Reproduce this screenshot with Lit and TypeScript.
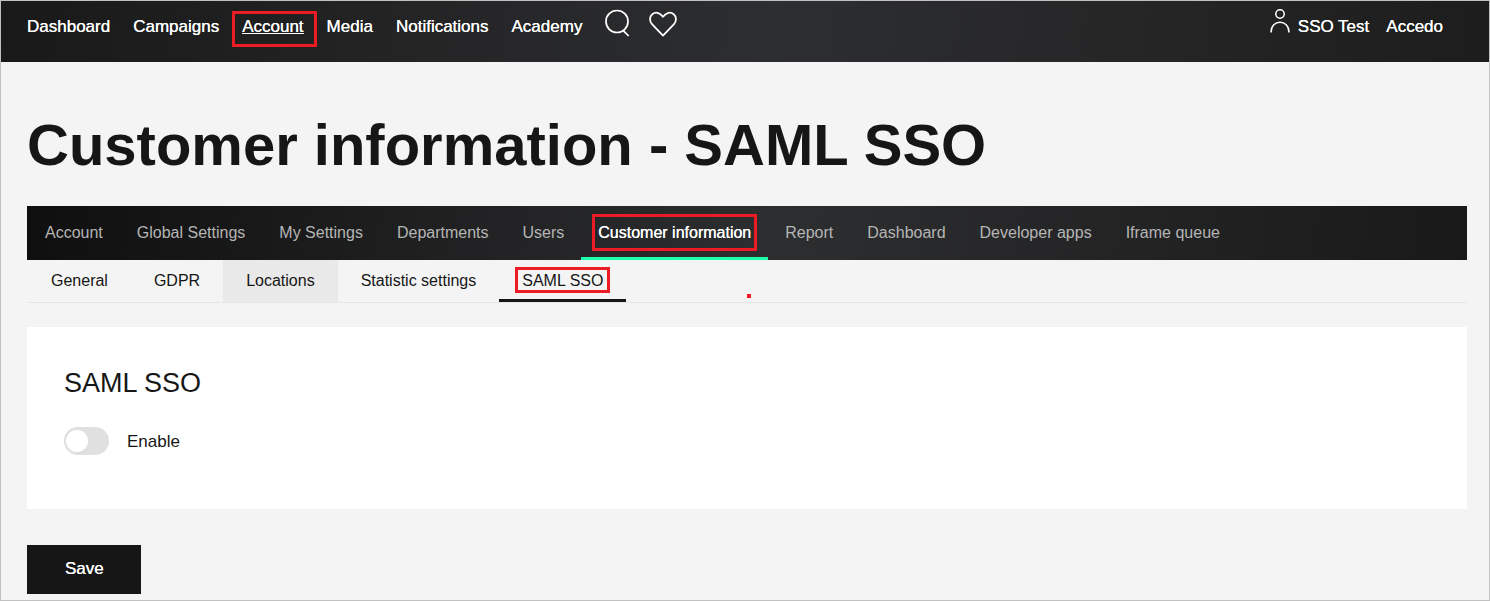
import { LitElement, html, css } from "lit";
import { customElement, state } from "lit/decorators.js";
import { classMap } from "lit/directives/class-map.js";

const MAIN_LINKS = ["Dashboard", "Campaigns", "Account", "Media", "Notifications", "Academy"];
const SECTIONS = [
  "Account",
  "Global Settings",
  "My Settings",
  "Departments",
  "Users",
  "Customer information",
  "Report",
  "Dashboard",
  "Developer apps",
  "Iframe queue",
];
const TABS = ["General", "GDPR", "Locations", "Statistic settings", "SAML SSO"];

@customElement("app-root")
export class AppRoot extends LitElement {
  @state() private enabled = false;

  static styles = css`
    :host {
      display: block;
      font-family: "Liberation Sans", Arial, sans-serif;
      font-size: 16px;
      line-height: 20px;
      color: #161616;
    }
    a {
      color: inherit;
      text-decoration: none;
    }
    .page {
      box-sizing: border-box;
      min-height: 100vh;
      border: 1px solid #c1c1c1;
      background: #f4f4f4;
    }
    .topbar {
      display: flex;
      justify-content: space-between;
      align-items: flex-start;
      box-sizing: border-box;
      height: 61px;
      padding: 7px 46px 0 26px;
      background: linear-gradient(95deg, #191919, #2d2e30 52%, #1d1d1d);
      color: #fff;
      font-size: 17px;
      text-shadow: 0 0 0 #fff;
    }
    .links,
    .user {
      display: flex;
      align-items: flex-start;
      gap: 23px;
    }
    .user {
      gap: 17px;
    }
    .links a,
    .user a {
      display: flex;
      position: relative;
      padding-top: 9px;
    }
    .links .icon-link,
    .user .person {
      padding-top: 0;
    }
    .links .heart {
      margin-left: -5px;
    }
    .user .person {
      gap: 8px;
    }
    .person span {
      padding-top: 9px;
    }
    .links .current {
      text-decoration: underline;
    }
    svg {
      display: block;
      fill: none;
      stroke: currentColor;
    }
    .current::after,
    .section.active::before,
    .tab.active::before {
      content: "";
      position: absolute;
      border: 3px solid #ed1c24;
    }
    .current::after {
      inset: 3px -13px -10px -10px;
    }
    main {
      padding: 0 22px 6px 26px;
    }
    h1 {
      margin: 0;
      padding: 49px 0 27px;
      font-size: 58px;
      line-height: 68px;
      font-weight: 700;
    }
    .sections {
      display: flex;
      padding-left: 1px;
      background: linear-gradient(95deg, #0f0f0f, #2d2e30 52%, #191919);
      color: #b5b5b5;
    }
    .section {
      position: relative;
      padding: 17px 17px 14px;
      border-bottom: 3px solid transparent;
    }
    .section.active {
      border-bottom-color: #1dffab;
      color: #fff;
      text-shadow: 0 0 0 #fff;
    }
    .section.active::before {
      inset: 8px 11px 6px;
    }
    .tabs {
      display: flex;
      position: relative;
      padding-left: 1px;
      border-bottom: 1px solid #e6e6e6;
    }
    .tab {
      position: relative;
      padding: 11px 23px 8px;
      border-bottom: 3px solid transparent;
    }
    .tab.hovered {
      background: #e9e9e9;
      border-bottom-color: #e9e9e9;
    }
    .tab.active {
      border-bottom-color: #161616;
    }
    .tab.active::before {
      inset: 7px 16px 6px;
    }
    .dot {
      position: absolute;
      left: 50%;
      bottom: 4px;
      width: 4px;
      height: 4px;
      background: #ed1c24;
    }
    .card {
      margin-top: 24px;
      padding: 38px 37px 54px;
      background: #fff;
    }
    h2 {
      margin: 0 0 26px;
      font-size: 27px;
      line-height: 36px;
      font-weight: 400;
    }
    .switch {
      display: flex;
      align-items: center;
      gap: 18px;
      width: max-content;
      font-size: 17px;
    }
    .switch span {
      padding-top: 2px;
    }
    .switch input {
      appearance: none;
      box-sizing: border-box;
      width: 45px;
      height: 28px;
      margin: 0;
      padding: 3px 2px;
      border-radius: 14px;
      background: #e0e0e0;
      display: flex;
    }
    .switch input::before {
      content: "";
      width: 22px;
      height: 22px;
      border-radius: 50%;
      background: #fff;
    }
    .switch input:checked {
      justify-content: flex-end;
      background: #1dffab;
    }
    .save {
      display: block;
      margin-top: 36px;
      padding: 14px 37px 15px 38px;
      border: 0;
      background: #161616;
      color: #fff;
      font-family: inherit;
      font-size: 17px;
      line-height: 20px;
      text-shadow: 0 0 0 #fff;
    }
  `;

  render() {
    return html`
      <div class="page">
        <header class="topbar">
          <nav class="links" aria-label="Main">
            ${MAIN_LINKS.map(
              (name) => html`<a href="#" class=${classMap({ current: name === "Account" })}>${name}</a>`
            )}
            <a href="#" class="icon-link" aria-label="Search">
              <svg width="26" height="30" viewBox="0 0 26 30" stroke-width="1.7">
                <circle cx="12" cy="13.5" r="11" />
                <path d="M18 22.3 23.7 28" />
              </svg>
            </a>
            <a href="#" class="icon-link heart" aria-label="Favourites">
              <svg width="28" height="30" viewBox="0 0 28 30" stroke-width="1.8" stroke-linejoin="round">
                <path
                  d="M14 27.6 3.2 16.4C.2 13.2.4 8.6 3.3 6.2 6.4 3.6 10.6 4.3 14 8.8 17.400 4.3 21.600 3.6 24.7 6.2 27.6 8.6 27.8 13.2 24.8 16.4Z"
                />
              </svg>
            </a>
          </nav>
          <div class="user">
            <a href="#" class="person">
              <svg width="20" height="26" viewBox="0 0 20 26" stroke-width="1.5">
                <circle cx="10" cy="6" r="4.2" />
                <path d="M1 24.5C1 10.8 19 10.8 19 24.5" />
              </svg>
              <span>SSO Test</span>
            </a>
            <a href="#">Accedo</a>
          </div>
        </header>
        <main>
          <h1>Customer information - SAML SSO</h1>
          <nav class="sections" aria-label="Sections">
            ${SECTIONS.map(
              (name) =>
                html`<a href="#" class=${classMap({ section: true, active: name === "Customer information" })}>${name}</a>`
            )}
          </nav>
          <nav class="tabs" aria-label="Customer information">
            ${TABS.map(
              (name) =>
                html`<a
                  href="#"
                  class=${classMap({ tab: true, hovered: name === "Locations", active: name === "SAML SSO" })}
                  >${name}</a
                >`
            )}
            <span class="dot"></span>
          </nav>
          <section class="card">
            <h2>SAML SSO</h2>
            <label class="switch">
              <input
                type="checkbox"
                .checked=${this.enabled}
                @change=${(e: Event) => (this.enabled = (e.target as HTMLInputElement).checked)}
              />
              <span>Enable</span>
            </label>
          </section>
          <button class="save" type="button">Save</button>
        </main>
      </div>
    `;
  }
}
